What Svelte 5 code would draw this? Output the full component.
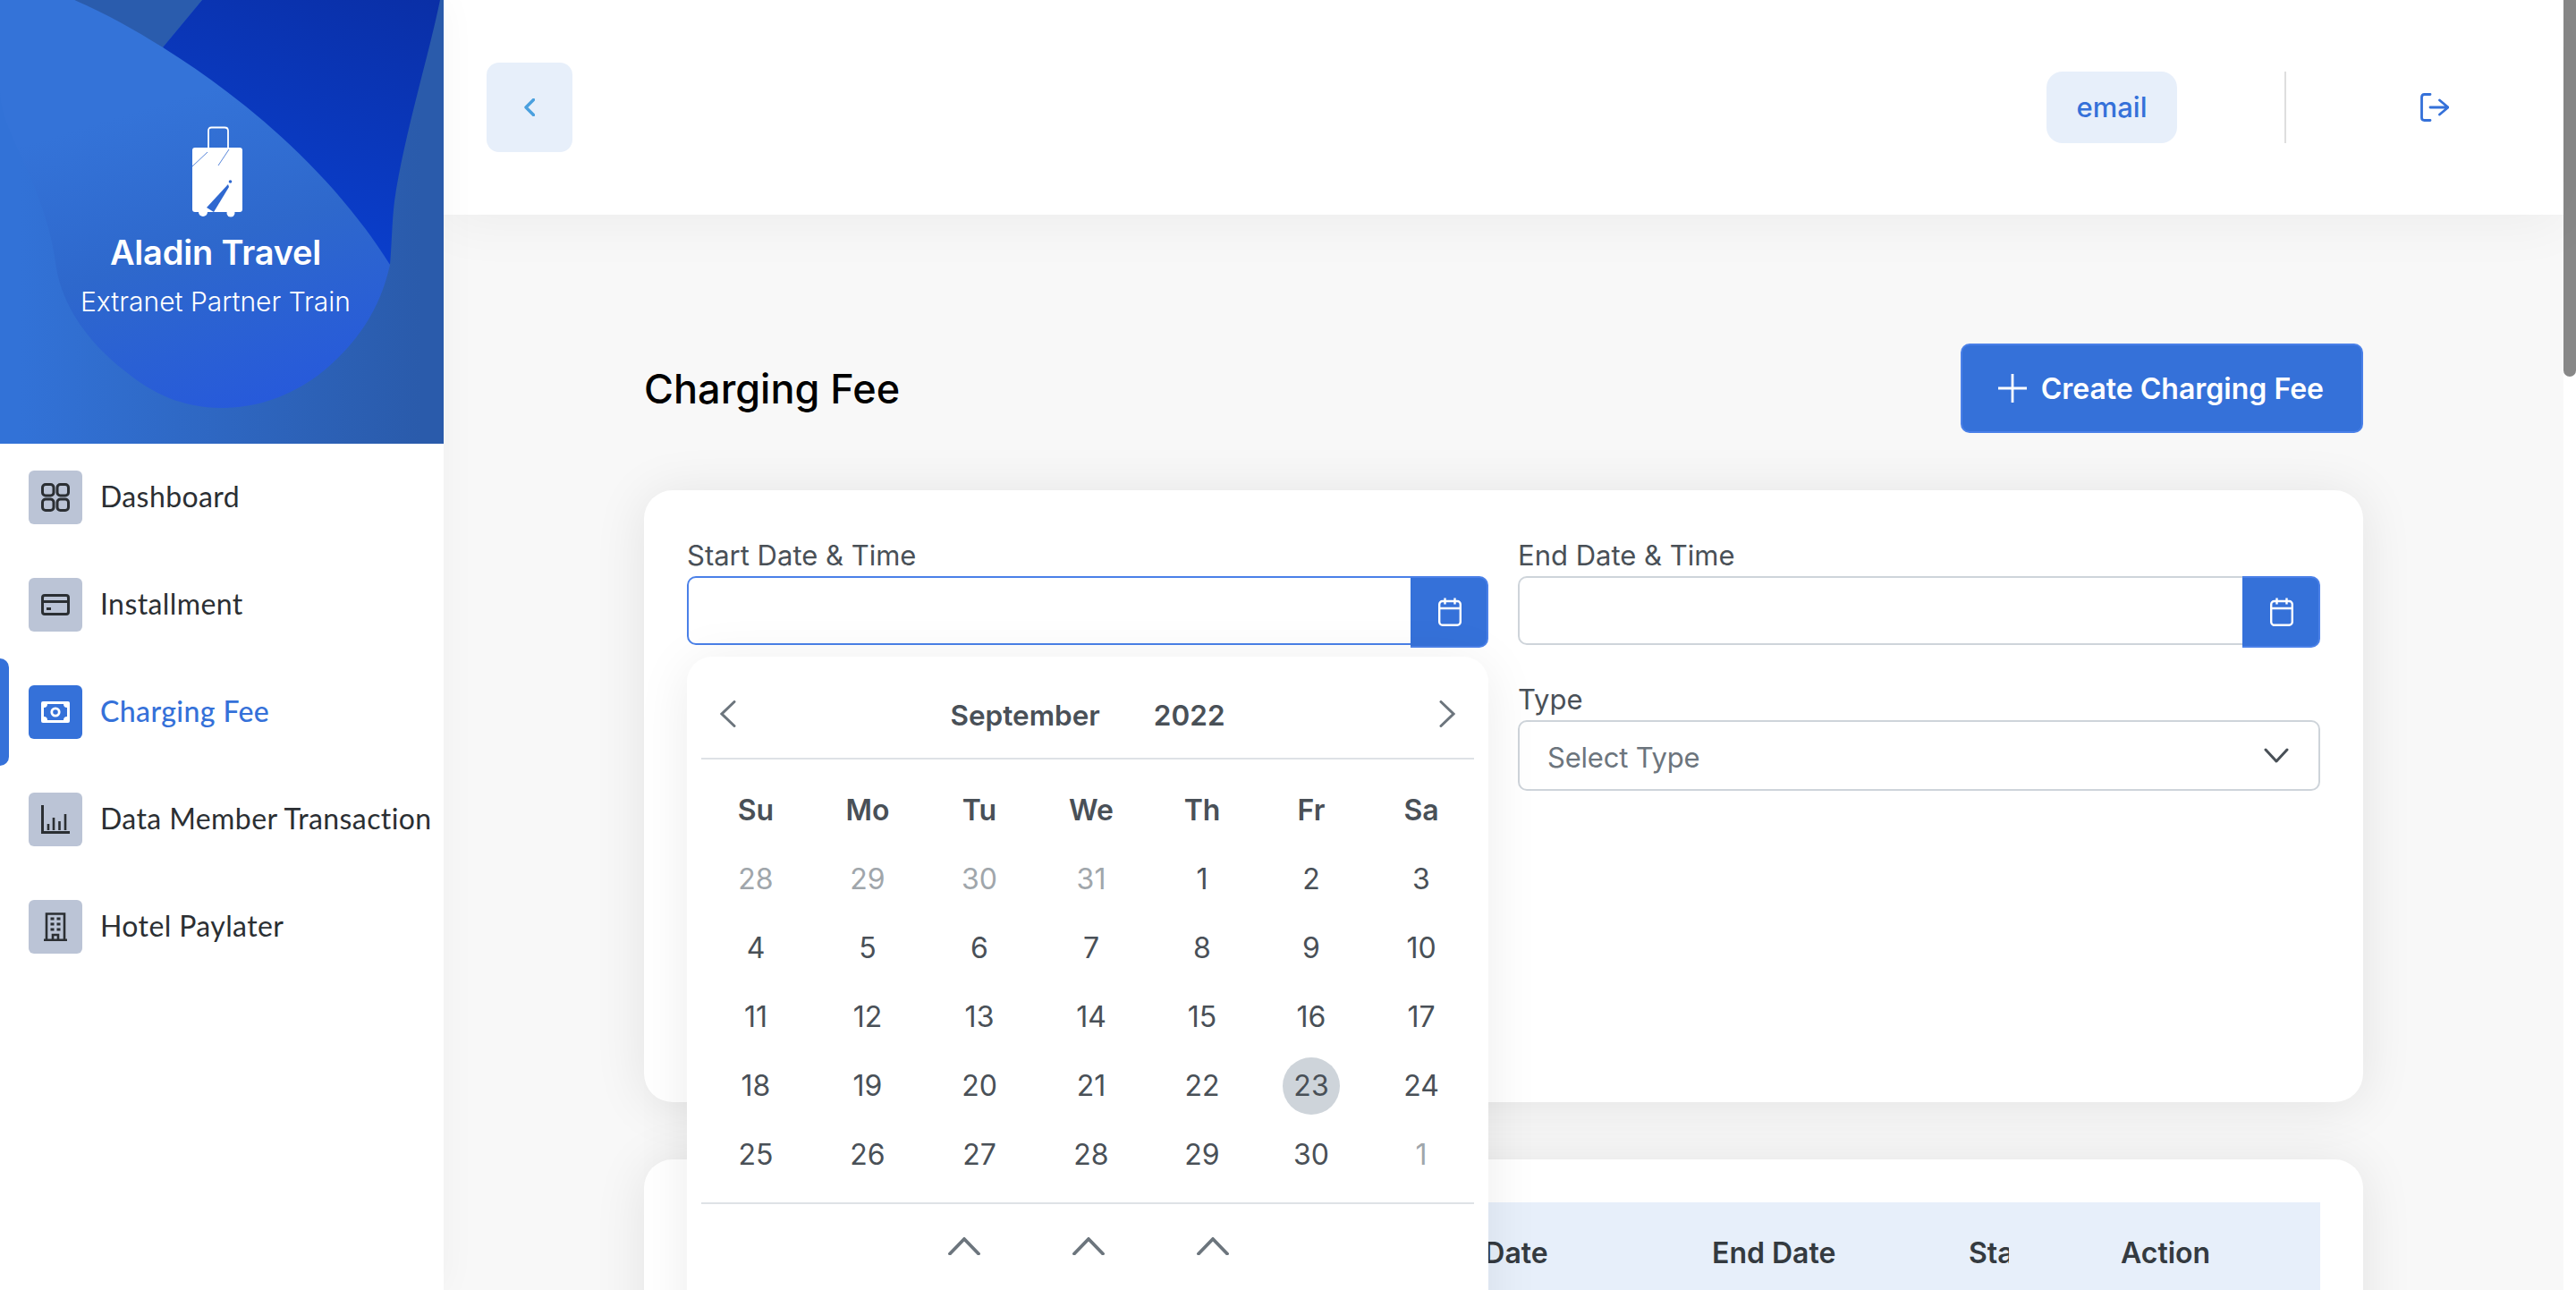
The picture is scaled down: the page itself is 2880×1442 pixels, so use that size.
<script>
  let navItems = [
    { label: 'Dashboard', icon: 'grid' },
    { label: 'Installment', icon: 'card' },
    { label: 'Charging Fee', icon: 'cash', active: true },
    { label: 'Data Member Transaction', icon: 'chart' },
    { label: 'Hotel Paylater', icon: 'building' }
  ];

  const weekdays = ['Su', 'Mo', 'Tu', 'We', 'Th', 'Fr', 'Sa'];

  // muted = days of the neighbouring months
  const weeks = [
    [[28, 1], [29, 1], [30, 1], [31, 1], [1], [2], [3]],
    [[4], [5], [6], [7], [8], [9], [10]],
    [[11], [12], [13], [14], [15], [16], [17]],
    [[18], [19], [20], [21], [22], [23], [24]],
    [[25], [26], [27], [28], [29], [30], [1, 1]]
  ];
</script>

{#snippet calendarIcon()}
  <svg class="cal-icon" viewBox="0 0 26 32" fill="none" stroke="#fff" stroke-width="2.400">
    <rect x="1.200" y="4" width="23.600" height="26.800" rx="3.500" />
    <path d="M1.200 12h23.600M7.500 0.500v7M18.500 0.500v7" />
  </svg>
{/snippet}

<div class="page">
  <aside class="sidebar">
    <div class="brand">
      <svg class="brand-bg" viewBox="0 0 496 496" aria-hidden="true">
        <defs>
          <linearGradient id="base" x1="0" y1="0" x2="0.95" y2="0">
            <stop offset="0.05" stop-color="#3272d7" />
            <stop offset="1" stop-color="#2a5bab" />
          </linearGradient>
          <linearGradient id="deep" x1="1" y1="0" x2="0.6" y2="1">
            <stop offset="0" stop-color="#0a2fa6" />
            <stop offset="1" stop-color="#0a3fce" />
          </linearGradient>
          <linearGradient id="blob" gradientUnits="userSpaceOnUse" x1="150" y1="60" x2="270" y2="456">
            <stop offset="0.15" stop-color="#3473d8" />
            <stop offset="0.55" stop-color="#2e68cc" />
            <stop offset="1" stop-color="#275ada" />
          </linearGradient>
        </defs>
        <rect width="496" height="496" fill="url(#base)" />
        <path d="M83 0H226L182 53Z" fill="#2a5cad" />
        <path d="M226 0H492C480 60 452 150 441 225C438 250 438 275 436 296L182 53Z" fill="url(#deep)" />
        <path d="M0 0H83C120 16 150 33 182 53C270 108 370 190 436 296C425 345 400 385 355 420C320 445 285 456 247 456C205 456 170 440 140 415C95 380 70 340 63 300C50 200 0 150 0 100Z" fill="url(#blob)" />
      </svg>
      <svg class="brand-logo" viewBox="0 0 58 102" aria-hidden="true">
        <path d="M19 25V5Q19 1.500 22.500 1.500H37Q41 1.500 41 5V25" fill="none" stroke="#fff" stroke-width="1.800" />
        <rect x="1" y="24" width="56" height="72" rx="3" fill="#fff" />
        <circle cx="13" cy="96" r="5" fill="#fff" />
        <circle cx="44" cy="97" r="4.500" fill="#fff" />
        <path d="M1 45L18 29" stroke="#2f68d0" stroke-width="0.800" />
        <path d="M30 44L42 26" stroke="#2f68d0" stroke-width="0.800" />
        <circle cx="43.500" cy="62" r="1.800" fill="#2f68d0" />
        <path d="M41 65L17 91L25 96L42 68Z" fill="#2f68d0" />
      </svg>
      <div class="brand-name">Aladin Travel</div>
      <div class="brand-sub">Extranet Partner Train</div>
    </div>

    <nav class="nav">
      {#each navItems as item}
        <div class="nav-item" class:active={item.active}>
          <span class="nav-icon">
            <svg viewBox="0 0 32 32" fill="none" stroke="currentColor" stroke-width="3">
              {#if item.icon === 'grid'}
                <rect x="1.500" y="1.500" width="12.500" height="12.500" rx="3.500" />
                <rect x="18" y="1.500" width="12.500" height="12.500" rx="3.500" />
                <rect x="1.500" y="18" width="12.500" height="12.500" rx="3.500" />
                <rect x="18" y="18" width="12.500" height="12.500" rx="3.500" />
              {:else if item.icon === 'card'}
                <rect x="1.500" y="5.500" width="29" height="21" rx="2.500" />
                <path d="M1.500 12.500H30.500" />
                <path d="M6 20.500H11" />
              {:else if item.icon === 'cash'}
                <rect x="0" y="4" width="32" height="24" rx="2" fill="#fff" stroke="none" />
                <rect x="3" y="7" width="26" height="18" fill="#3571d9" stroke="none" />
                <circle cx="16" cy="16" r="4.200" stroke="#fff" stroke-width="2.800" />
                <path d="M3 7h4a4 4 0 0 1-4 4ZM29 7h-4a4 4 0 0 0 4 4ZM3 25h4a4 4 0 0 0-4-4ZM29 25h-4a4 4 0 0 1 4-4Z" fill="#fff" stroke="none" />
              {:else if item.icon === 'chart'}
                <path d="M1.500 0V30.500H32" />
                <path d="M8 21V28M14 14V28M20.500 18V28M27 10V28" stroke-width="2.600" />
              {:else}
                <path d="M6 31V1.500H26V31M3 30.700H29" stroke-width="2.600" />
                <path d="M13 31V25H19V31" stroke-width="2.600" />
                <path d="M10.500 7h4M17.500 7h4M10.500 13h4M17.500 13h4M10.500 19h4M17.500 19h4" stroke-width="3.200" />
              {/if}
            </svg>
          </span>
          <span class="nav-label">{item.label}</span>
        </div>
      {/each}
    </nav>
  </aside>

  <div class="main">
    <header class="topbar">
      <button class="back-btn" aria-label="Back">
        <svg viewBox="0 0 12 20" fill="none" stroke="#4aa0de" stroke-width="3.400" stroke-linecap="round" stroke-linejoin="round">
          <path d="M10.500 1.500L2 10L10.500 18.500" />
        </svg>
      </button>
      <div class="topbar-right">
        <span class="email">email</span>
        <span class="divider"></span>
        <button class="logout" aria-label="Log out">
          <svg viewBox="0 0 32 32" fill="none" stroke="#3571d9" stroke-width="2.800" stroke-linecap="round" stroke-linejoin="round">
            <path d="M11 1.500H4.500Q1.500 1.500 1.500 4.500V27.500Q1.500 30.500 4.500 30.500H11" />
            <path d="M11 16H31M21.500 8L31 16L21.500 24" />
          </svg>
        </button>
      </div>
    </header>

    <div class="content">
      <div class="title-row">
        <h1>Charging Fee</h1>
        <button class="create-btn">
          <svg viewBox="0 0 32 32" fill="none" stroke="#fff" stroke-width="2.800"><path d="M16 0V32M0 16H32" /></svg>
          Create Charging Fee
        </button>
      </div>

      <section class="card filter-card">
        <div class="fields">
          <div class="field">
            <span class="field-label">Start Date &amp; Time</span>
            <div class="date-input focused">
              <span class="input-box"></span>
              <span class="input-btn">{@render calendarIcon()}</span>
            </div>

            <div class="picker">
              <div class="picker-head">
                <svg class="chev" viewBox="0 0 18 30" fill="none" stroke="#6c757d" stroke-width="3" stroke-linecap="round"><path d="M16 1.500L2 15L16 28.500" /></svg>
                <div class="picker-title"><span>September</span><span>2022</span></div>
                <svg class="chev" viewBox="0 0 18 30" fill="none" stroke="#6c757d" stroke-width="3" stroke-linecap="round"><path d="M2 1.500L16 15L2 28.500" /></svg>
              </div>
              <div class="days">
                {#each weekdays as day}
                  <span class="weekday">{day}</span>
                {/each}
                {#each weeks as week}
                  {#each week as [num, muted]}
                    <span class="day" class:muted class:selected={num === 23}>{num}</span>
                  {/each}
                {/each}
              </div>
              <div class="time-arrows">
                {#each [0, 1, 2] as n}
                  <svg viewBox="0 0 36 20" fill="none" stroke="#6c757d" stroke-width="3.800" stroke-linecap="round" data-n={n}><path d="M2 18.500L18 2L34 18.500" /></svg>
                {/each}
              </div>
            </div>
          </div>

          <div class="field">
            <span class="field-label">End Date &amp; Time</span>
            <div class="date-input">
              <span class="input-box"></span>
              <span class="input-btn">{@render calendarIcon()}</span>
            </div>
          </div>

          <div class="field type-field">
            <span class="field-label">Type</span>
            <div class="select">
              <span class="select-text">Select Type</span>
              <svg viewBox="0 0 28 17" fill="none" stroke="#495057" stroke-width="3" stroke-linecap="round" stroke-linejoin="round"><path d="M2 2L14 15L26 2" /></svg>
            </div>
          </div>
        </div>
      </section>

      <section class="card table-card">
        <div class="table-head">
          <span>Start Date</span>
          <span>End Date</span>
          <span class="clipped">Status</span>
          <span>Action</span>
        </div>
      </section>
    </div>
  </div>

  <div class="scroll-track"><div class="scroll-thumb"></div></div>
</div>

<style>
  :global(html), :global(body) {
    margin: 0;
    height: 100%;
    overflow: hidden;
  }

  .page {
    display: flex;
    height: 1442px;
    overflow: hidden;
    background: #fff;
    font-family: Inter, "Liberation Sans", sans-serif;
    color: #212529;
  }

  button {
    border: none;
    padding: 0;
    font-family: inherit;
    cursor: pointer;
  }

  /* sidebar */
  .sidebar {
    width: 496px;
    flex: none;
    background: #fff;
    position: relative;
    z-index: 3;
    box-shadow: 0 0 40px rgba(0, 0, 0, 0.04);
  }

  .brand {
    height: 496px;
    position: relative;
    display: flex;
    flex-direction: column;
    align-items: center;
    color: #fff;
    padding-right: 14px;
    box-sizing: border-box;
    overflow: hidden;
  }

  .brand-bg {
    position: absolute;
    inset: 0;
    width: 496px;
    height: 496px;
  }

  .brand-logo {
    position: relative;
    width: 58px;
    height: 102px;
    margin: 141px 0 0 4px;
  }

  .brand-name {
    position: relative;
    font-size: 38px;
    font-weight: 600;
    letter-spacing: -0.2px;
    line-height: 48px;
    margin-top: 15px;
  }

  .brand-sub {
    position: relative;
    font-size: 30px;
    font-weight: 300;
    line-height: 36px;
    margin-top: 13px;
  }

  .nav {
    display: flex;
    flex-direction: column;
  }

  .nav-item {
    height: 120px;
    display: flex;
    align-items: center;
    gap: 20px;
    padding-left: 32px;
    color: #2b2f33;
    position: relative;
  }

  .nav-item.active {
    color: #3571d9;
  }

  .nav-item.active::before {
    content: '';
    position: absolute;
    left: 0;
    top: 0;
    width: 10px;
    height: 120px;
    background: #3571d9;
    border-radius: 0 10px 10px 0;
  }

  .nav-icon {
    width: 60px;
    height: 60px;
    flex: none;
    border-radius: 6px;
    background: #bbc4d6;
    display: flex;
    align-items: center;
    justify-content: center;
  }

  .nav-icon svg {
    width: 32px;
    height: 32px;
  }

  .active .nav-icon {
    background: #3571d9;
  }

  .nav-label {
    font-family: Lato, sans-serif;
    font-size: 32px;
    letter-spacing: 0.4px;
    white-space: nowrap;
    margin-top: -3px;
  }

  .active .nav-label {
    font-weight: 500;
  }

  /* main */
  .main {
    flex: 1;
    min-width: 0;
    display: flex;
    flex-direction: column;
    background: #f8f8f8;
  }

  .topbar {
    height: 240px;
    flex: none;
    background: #fff;
    box-shadow: 0 8px 60px rgba(0, 0, 0, 0.05);
    display: flex;
    align-items: center;
    justify-content: space-between;
    padding: 0 128px 0 48px;
    position: relative;
    z-index: 1;
  }

  .back-btn {
    width: 96px;
    height: 100px;
    border-radius: 14px;
    background: #e7effa;
    display: flex;
    align-items: center;
    justify-content: center;
  }

  .back-btn svg {
    width: 12px;
    height: 20px;
  }

  .topbar-right {
    display: flex;
    align-items: center;
  }

  .email {
    width: 146px;
    height: 80px;
    border-radius: 18px;
    background: #e7effa;
    color: #3571d9;
    font-size: 31px;
    font-weight: 500;
    display: flex;
    align-items: center;
    justify-content: center;
    padding-bottom: 2px;
    box-sizing: border-box;
  }

  .divider {
    width: 2px;
    height: 80px;
    background: #dedede;
    margin-left: 120px;
    margin-right: 150px;
  }

  .logout {
    width: 32px;
    height: 32px;
    background: none;
  }

  .content {
    flex: 1;
    padding: 144px 224px 0;
  }

  .title-row {
    height: 100px;
    display: flex;
    align-items: center;
    justify-content: space-between;
  }

  h1 {
    margin: 0;
    font-size: 45px;
    font-weight: 500;
    color: #000;
  }

  .create-btn {
    height: 100px;
    padding: 0 42px 0 40px;
    background: #3571d9;
    border: 2px solid #4a80e8;
    border-radius: 10px;
    color: #fff;
    font-size: 32px;
    font-weight: 600;
    display: flex;
    align-items: center;
    gap: 16px;
  }

  .create-btn svg {
    width: 32px;
    height: 32px;
  }

  .card {
    background: #fff;
    border-radius: 32px;
    box-shadow: 0 4px 60px rgba(0, 0, 0, 0.09);
    box-sizing: border-box;
    padding: 48px;
  }

  .filter-card {
    margin-top: 64px;
    height: 684px;
  }

  .table-card {
    margin-top: 64px;
    height: 600px;
  }

  .fields {
    display: grid;
    grid-template-columns: 896px 897px;
    column-gap: 33px;
    row-gap: 33px;
  }

  .field {
    position: relative;
    min-width: 0;
  }

  .type-field {
    grid-column: 2;
  }

  .field-label {
    display: block;
    font-size: 31px;
    line-height: 50px;
    margin-bottom: -2px;
    color: #495057;
  }

  .date-input {
    display: flex;
    height: 80px;
  }

  .input-box {
    flex: 1;
    height: 77px;
    box-sizing: border-box;
    background: #fff;
    border: 2px solid #ced4da;
    border-right: none;
    border-radius: 10px 0 0 10px;
  }

  .focused .input-box {
    border-color: #4a80e8;
  }

  .input-btn {
    width: 87px;
    background: #3571d9;
    border: 2px solid #4a80e8;
    border-left: none;
    box-sizing: border-box;
    border-radius: 0 10px 10px 0;
    display: flex;
    align-items: center;
    justify-content: center;
    padding-left: 2px;
  }

  .cal-icon {
    width: 26px;
    height: 32px;
  }

  .select {
    height: 79px;
    box-sizing: border-box;
    border: 2px solid #ced4da;
    border-radius: 10px;
    padding: 0 33px 0 31px;
    display: flex;
    align-items: center;
    justify-content: space-between;
    font-size: 31px;
    letter-spacing: -0.2px;
    color: #6c757d;
  }

  .select-text {
    margin-top: 4px;
  }

  .select svg {
    width: 28px;
    height: 17px;
  }

  /* date picker dropdown, lies over the cards */
  .picker {
    position: absolute;
    left: 0;
    top: 138px;
    width: 896px;
    height: 900px;
    box-sizing: border-box;
    background: #fff;
    border-radius: 28px;
    box-shadow: 0 8px 60px rgba(0, 0, 0, 0.08);
    z-index: 2;
    color: #495057;
  }

  .picker-head {
    height: 113px;
    box-sizing: content-box;
    margin: 0 16px;
    padding: 0 21px;
    border-bottom: 2px solid #dee2e6;
    display: flex;
    align-items: center;
    justify-content: space-between;
  }

  .chev {
    width: 18px;
    height: 30px;
    margin-top: 15px;
  }

  .picker-title {
    display: flex;
    gap: 60px;
    font-size: 31.500px;
    font-weight: 600;
    margin-top: 18px;
  }

  .days {
    display: grid;
    grid-template-columns: 124px 126px 124px 126px 122px 122px 124px;
    grid-auto-rows: 77px;
    padding: 18px 0 15px 15px;
  }

  .weekday,
  .day {
    display: flex;
    align-items: center;
    justify-content: center;
    font-size: 32px;
  }

  .weekday {
    font-weight: 600;
  }

  .muted {
    color: #a0a6ab;
  }

  .selected {
    position: relative;
    z-index: 0;
  }

  .selected::before {
    content: '';
    position: absolute;
    left: 50%;
    top: 50%;
    width: 64px;
    height: 64px;
    margin: -32px 0 0 -32px;
    border-radius: 50%;
    background: #ced4da;
    z-index: -1;
  }

  .time-arrows {
    margin: 0 16px;
    padding: 37px 0 0 2px;
    border-top: 2px solid #dee2e6;
    display: flex;
    justify-content: center;
    gap: 103px;
  }

  .time-arrows svg {
    width: 36px;
    height: 20px;
  }

  .table-head {
    height: 112px;
    background: #e7effa;
    display: grid;
    grid-template-columns: 338px 287px 170px auto;
    padding-left: 808px;
    box-sizing: border-box;
    align-items: center;
    font-size: 32px;
    font-weight: 600;
    color: #343a40;
    white-space: nowrap;
  }

  .clipped {
    width: 45px;
    overflow: hidden;
  }

  .scroll-track {
    width: 14px;
    flex: none;
    background: #fff;
  }

  .scroll-thumb {
    height: 421px;
    background: #888;
    border-radius: 0 0 7px 7px;
  }
</style>
